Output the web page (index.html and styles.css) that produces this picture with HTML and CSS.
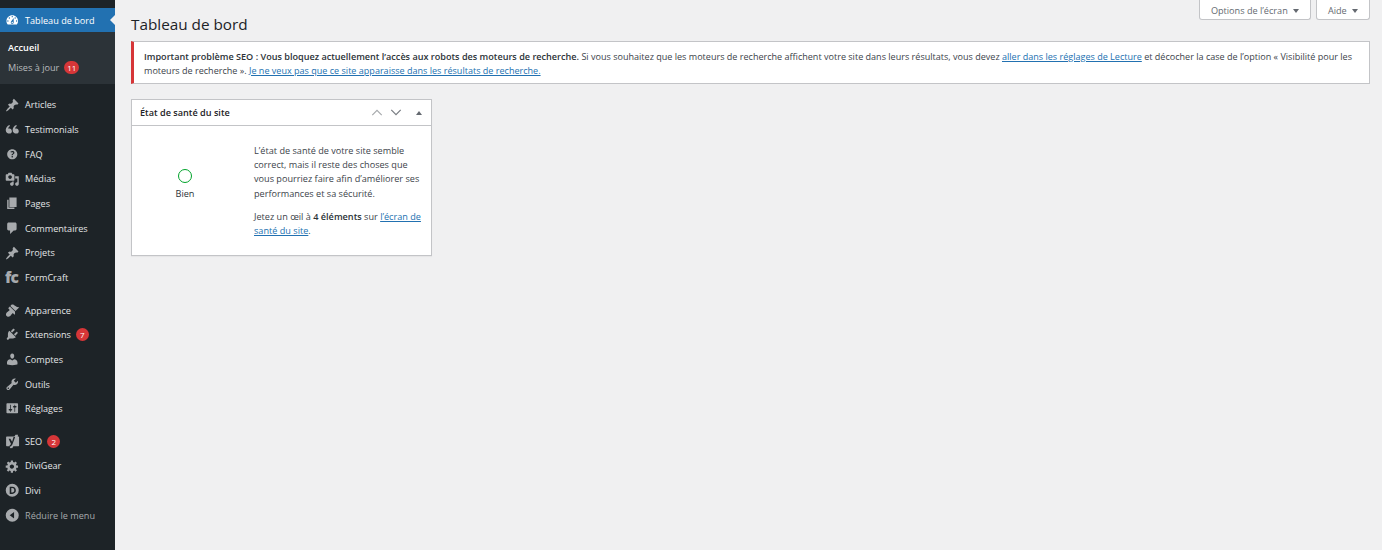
FILE: index.html
```html
<!DOCTYPE html>
<html lang="fr">
<head>
<meta charset="utf-8">
<title>Tableau de bord</title>
<link rel="stylesheet" href="styles.css">
</head>
<body>
<svg class="sprite" width="0" height="0" aria-hidden="true">
<symbol id="i-dash" viewBox="0 0 20 20"><path d="M3.76 16h12.48c1.1-1.37 1.76-3.11 1.76-5 0-4.42-3.58-8-8-8s-8 3.58-8 8c0 1.89.66 3.63 1.76 5zM10 4c.55 0 1 .45 1 1s-.45 1-1 1-1-.45-1-1 .45-1 1-1zM6 6c.55 0 1 .45 1 1s-.45 1-1 1-1-.45-1-1 .45-1 1-1zm8 0c.55 0 1 .45 1 1s-.45 1-1 1-1-.45-1-1 .45-1 1-1zm-5.37 5.55L12 7v6c0 1.1-.9 2-2 2s-2-.9-2-2c0-.57.24-1.08.63-1.45zM4 10c.55 0 1 .45 1 1s-.45 1-1 1-1-.45-1-1 .45-1 1-1zm12 0c.55 0 1 .45 1 1s-.45 1-1 1-1-.45-1-1 .45-1 1-1zm-5 3c0-.55-.45-1-1-1s-1 .45-1 1 .45 1 1 1 1-.45 1-1z" fill-rule="evenodd"/></symbol>
<symbol id="i-pin" viewBox="0 0 20 20"><path d="M10.44 3.02l1.82-1.82 6.36 6.35-1.83 1.82c-1.05-.68-2.48-.57-3.41.36l-.75.75c-.92.93-1.04 2.35-.35 3.41l-1.83 1.82-2.41-2.41-2.8 2.79c-.42.42-3.38 2.71-3.8 2.29s1.86-3.39 2.28-3.81l2.79-2.79L4.1 9.36l1.83-1.82c1.05.69 2.48.57 3.41-.36l.75-.75c.93-.92 1.04-2.35.35-3.41z"/></symbol>
<symbol id="i-quote" viewBox="0 0 20 20"><path d="M9.5 13c0 1.7-1.4 3-3.3 3C3.7 16 1 14.500 1 11c0-3.300 2.300-5.800 5-7l1 1.500C5.300 6.500 4.500 7.700 4.400 9.200c.5-.2 1-.3 1.600-.3 2 0 3.500 1.800 3.500 4.100zm9.500 0c0 1.700-1.400 3-3.300 3-2.500 0-5.200-1.500-5.200-5 0-3.300 2.300-5.800 5-7l1 1.500c-1.700 1-2.500 2.200-2.600 3.700.5-.2 1-.3 1.600-.3 2 0 3.500 1.800 3.500 4.100z"/></symbol>
<symbol id="i-help" viewBox="0 0 20 20"><path d="M17 10c0-3.870-3.140-7-7-7-3.870 0-7 3.130-7 7s3.130 7 7 7c3.860 0 7-3.130 7-7zm-6.300 1.480H9.140v-.43c0-.38.08-.7.24-.98s.46-.57.88-.89c.41-.29.68-.53.81-.71.14-.18.2-.39.2-.62 0-.25-.09-.44-.28-.58-.19-.13-.45-.19-.79-.19-.58 0-1.250.19-2 .57l-.64-1.280c.87-.49 1.800-.74 2.770-.74.81 0 1.450.2 1.920.58.48.39.71.91.71 1.550 0 .43-.09.8-.29 1.110-.19.32-.57.67-1.110 1.060-.38.28-.61.49-.71.63-.1.15-.15.34-.15.57v.35zm-1.470 2.740c-.18-.17-.27-.42-.27-.73 0-.33.08-.58.26-.75s.43-.25.77-.25c.32 0 .57.09.75.26s.27.42.27.74c0 .3-.09.55-.27.72-.18.18-.43.27-.75.27-.33 0-.58-.09-.76-.26z"/></symbol>
<symbol id="i-media" viewBox="0 0 20 20"><path d="M13 11V4c0-.55-.45-1-1-1h-1.670L9 1H5L3.670 3H2c-.55 0-1 .45-1 1v7c0 .55.45 1 1 1h10c.55 0 1-.45 1-1zM7 4.500c1.380 0 2.500 1.120 2.500 2.500S8.380 9.500 7 9.500 4.500 8.380 4.500 7 5.620 4.500 7 4.500zM14 6h5v10.500c0 1.380-1.120 2.500-2.500 2.500S14 17.880 14 16.500s1.120-2.500 2.500-2.500c.17 0 .34.02.5.05V9h-3V6zm-4 8.050V13h2v3.500c0 1.380-1.120 2.500-2.500 2.500S7 17.880 7 16.500 8.120 14 9.500 14c.17 0 .34.02.5.05z"/></symbol>
<symbol id="i-page" viewBox="0 0 20 20"><path d="M6 15V2h10v13H6zm-1 1h8v2H3V5h2v11z"/></symbol>
<symbol id="i-comment" viewBox="0 0 20 20"><path d="M5 2h9c1.100 0 2 .9 2 2v7c0 1.100-.9 2-2 2h-2l-5 5v-5H5c-1.100 0-2-.9-2-2V4c0-1.100.9-2 2-2z"/></symbol>
<symbol id="i-brush" viewBox="0 0 20 20"><path d="M14.480 11.060L7.410 3.990l1.500-1.500c.5-.56 2.300-.47 3.510.32 1.210.8 1.430 1.280 2.910 2.100 1.180.64 2.450 1.260 4.450.85zm-.71.71L6.700 4.700 4.930 6.470c-.39.39-.39 1.020 0 1.410l1.060 1.060c.39.39.39 1.030 0 1.420-.6.6-1.430 1.110-2.210 1.690-.35.26-.7.53-1.010.84-1.340 1.340-1.780 2.910-1.130 4.300.15.33.36.64.62.9.26.27.57.48.91.64 1.390.64 2.960.2 4.300-1.130.31-.31.58-.66.84-1.010.58-.78 1.090-1.610 1.690-2.210.39-.39 1.030-.39 1.420 0l1.060 1.060c.39.39 1.020.39 1.410 0z"/></symbol>
<symbol id="i-plug" viewBox="0 0 20 20"><path d="M13.110 4.360L9.870 7.600 8 5.730l3.240-3.240c.35-.34 1.050-.2 1.560.32.52.51.66 1.210.31 1.550zm-8 1.770l.91-1.120 9.010 9.010-1.190.84c-.71.71-2.630 1.160-3.820 1.160H6.140L4.900 17.260c-.59.59-1.540.59-2.120 0-.59-.58-.59-1.530 0-2.120l1.240-1.240v-3.880c0-1.130.4-3.190 1.090-3.890zm7.260 3.970l3.240-3.240c.34-.35 1.040-.21 1.550.31.52.51.66 1.210.31 1.550l-3.240 3.250z"/></symbol>
<symbol id="i-user" viewBox="0 0 20 20"><path d="M10 9.250c-2.270 0-2.730-3.440-2.730-3.440C7 4.020 7.820 2 9.970 2c2.160 0 2.980 2.020 2.710 3.810 0 0-.41 3.440-2.680 3.440zm0 2.570L12.720 10c2.390 0 4.520 2.330 4.520 4.530v2.490s-3.650 1.130-7.240 1.130c-3.650 0-7.240-1.130-7.240-1.130v-2.490c0-2.250 1.940-4.480 4.470-4.480z"/></symbol>
<symbol id="i-tool" viewBox="0 0 20 20"><path d="M16.680 9.770c-1.340 1.340-3.300 1.670-4.950.99l-5.410 6.520c-.99.99-2.590.99-3.580 0s-.99-2.590 0-3.570l6.520-5.420c-.68-1.650-.35-3.610.99-4.950 1.280-1.280 3.120-1.620 4.720-1.060l-2.890 2.890 2.820 2.820 2.860-2.870c.53 1.580.18 3.390-1.080 4.650zM3.810 16.210c.4.39 1.040.39 1.430 0 .4-.4.4-1.040 0-1.430-.39-.4-1.030-.4-1.430 0-.39.39-.39 1.030 0 1.430z"/></symbol>
<symbol id="i-set" viewBox="0 0 20 20"><path d="M18 16V4c0-.55-.45-1-1-1H3c-.55 0-1 .45-1 1v12c0 .55.45 1 1 1h14c.55 0 1-.45 1-1zM8 11h1c.55 0 1 .45 1 1s-.45 1-1 1H8v1.500c0 .28-.22.5-.5.5s-.5-.22-.5-.5V13H6c-.55 0-1-.45-1-1s.45-1 1-1h1V5.500c0-.28.22-.5.5-.5s.5.22.5.5V11zm5-2h-1c-.55 0-1-.45-1-1s.45-1 1-1h1V5.500c0-.28.22-.5.5-.5s.5.22.5.5V7h1c.55 0 1 .45 1 1s-.45 1-1 1h-1v5.500c0 .28-.22.5-.5.5s-.5-.22-.5-.5V9z"/></symbol>
<symbol id="i-yoast" viewBox="0 0 20 20"><path fill-rule="evenodd" d="M2.500 3.500H13L14.500 1H18L17.500 3.500H18.500c.5 0 1 .4 1 1V16c0 .6-.5 1-1 1H11.500L10 19.500H6.500L7.500 17H2.500c-.6 0-1-.4-1-1V4.500c0-.6.400-1 1-1zM5 6.500l3.300 7.300c-.3.9-.9 1.300-1.800 1.500v1.500c2 0 3.100-1 3.800-2.800l3.700-10h-2.200L9.800 10.700 7.300 6.500z"/></symbol>
<symbol id="i-gear" viewBox="0 0 20 20"><path d="M18 12h-2.180c-.17.7-.44 1.350-.81 1.930l1.540 1.540-2.100 2.100-1.540-1.540c-.58.36-1.230.63-1.910.79V19H8v-2.180c-.68-.16-1.330-.43-1.910-.79l-1.540 1.540-2.120-2.120 1.540-1.540c-.36-.58-.63-1.230-.79-1.910H1V9.030h2.170c.16-.7.44-1.350.8-1.940L2.430 5.550l2.100-2.100 1.540 1.540c.58-.37 1.240-.64 1.930-.81V2h3v2.180c.68.16 1.330.43 1.910.79l1.540-1.540 2.120 2.120-1.540 1.540c.36.59.64 1.240.8 1.940H18V12zm-8.500 1.500c1.660 0 3-1.340 3-3s-1.340-3-3-3-3 1.340-3 3 1.340 3 3 3z"/></symbol>
<symbol id="i-divi" viewBox="0 0 20 20"><path fill-rule="evenodd" d="M10 1a9 9 0 1 1 0 18 9 9 0 0 1 0-18zM6.500 5v10H10c3.200 0 5-2.100 5-5s-1.800-5-5-5zm2.200 2H10c1.800 0 2.800 1.200 2.800 3s-1 3-2.800 3H8.700z"/></symbol>
<symbol id="i-collapse" viewBox="0 0 20 20"><path fill-rule="evenodd" d="M10 1a9 9 0 1 1 0 18 9 9 0 0 1 0-18zm2.500 4.500L6.500 10l6 4.500z"/></symbol>
</svg>

<div class="layout">
  <nav class="sidebar">
    <a class="item current">
      <svg class="icon"><use href="#i-dash"/></svg><span>Tableau de bord</span>
    </a>
    <div class="submenu">
      <a class="sub strong">Accueil</a>
      <a class="sub">Mises à jour <b class="badge">11</b></a>
    </div>
    <div class="group">
      <a class="item"><svg class="icon"><use href="#i-pin"/></svg><span>Articles</span></a>
      <a class="item"><svg class="icon"><use href="#i-quote"/></svg><span>Testimonials</span></a>
      <a class="item"><svg class="icon"><use href="#i-help"/></svg><span>FAQ</span></a>
      <a class="item"><svg class="icon"><use href="#i-media"/></svg><span>Médias</span></a>
      <a class="item"><svg class="icon"><use href="#i-page"/></svg><span>Pages</span></a>
      <a class="item"><svg class="icon"><use href="#i-comment"/></svg><span>Commentaires</span></a>
      <a class="item"><svg class="icon"><use href="#i-pin"/></svg><span>Projets</span></a>
      <a class="item"><i class="icon fc">fc</i><span>FormCraft</span></a>
    </div>
    <div class="group">
      <a class="item"><svg class="icon"><use href="#i-brush"/></svg><span>Apparence</span></a>
      <a class="item"><svg class="icon"><use href="#i-plug"/></svg><span>Extensions</span><b class="badge">7</b></a>
      <a class="item"><svg class="icon"><use href="#i-user"/></svg><span>Comptes</span></a>
      <a class="item"><svg class="icon"><use href="#i-tool"/></svg><span>Outils</span></a>
      <a class="item"><svg class="icon"><use href="#i-set"/></svg><span>Réglages</span></a>
    </div>
    <div class="group">
      <a class="item"><svg class="icon"><use href="#i-yoast"/></svg><span>SEO</span><b class="badge">2</b></a>
      <a class="item"><svg class="icon"><use href="#i-gear"/></svg><span>DiviGear</span></a>
      <a class="item"><svg class="icon"><use href="#i-divi"/></svg><span>Divi</span></a>
      <a class="item muted"><svg class="icon"><use href="#i-collapse"/></svg><span>Réduire le menu</span></a>
    </div>
  </nav>

  <main class="content">
    <div class="screen-meta">
      <button class="tab tab-options">Options de l’écran <i class="caret"></i></button>
      <button class="tab tab-help">Aide <i class="caret"></i></button>
    </div>
    <h1 class="title">Tableau de bord</h1>
    <div class="notice">
      <p><strong>Important problème SEO : Vous bloquez actuellement l’accès aux robots des moteurs de recherche.</strong> Si vous souhaitez que les moteurs de recherche affichent votre site dans leurs résultats, vous devez <a class="link" href="#">aller dans les réglages de Lecture</a> et décocher la case de l’option « Visibilité pour les moteurs de recherche ». <a class="link" href="#">Je ne veux pas que ce site apparaisse dans les résultats de recherche.</a></p>
    </div>
    <section class="box">
      <header class="box-head">
        <h2>État de santé du site</h2>
        <div class="box-controls">
          <svg class="chev" viewBox="0 0 14 8"><path class="chev-up" d="M1.500 7 7 1.500 12.500 7"/></svg>
          <svg class="chev" viewBox="0 0 14 8"><path class="chev-down" d="M1.500 1 7 6.500 12.500 1"/></svg>
          <i class="tri"></i>
        </div>
      </header>
      <div class="box-body">
        <div class="status">
          <span class="ring"></span>
          <span>Bien</span>
        </div>
        <div class="desc">
          <p>L’état de santé de votre site semble correct, mais il reste des choses que vous pourriez faire afin d’améliorer ses performances et sa sécurité.</p>
          <p>Jetez un œil à <strong>4 éléments</strong> sur <a class="link" href="#">l’écran de santé du site</a>.</p>
        </div>
      </div>
    </section>
  </main>
</div>
</body>
</html>
```
FILE: styles.css
```css
* { box-sizing: border-box; }
html, body { margin: 0; height: 100%; }
body {
  background: #f0f0f1;
  color: #3c434a;
  font-family: "Open Sans", "Noto Sans", sans-serif;
  font-size: 9.15px;
  overflow: hidden;
}
.sprite { position: absolute; }
.layout { display: flex; height: 550px; }

.sidebar {
  width: 115px;
  flex: none;
  background: #1d2327;
  padding-top: 8px;
  color: #f0f0f1;
}
.item {
  display: flex;
  align-items: center;
  height: 24.65px;
  padding: 1.3px 0 0 5px;
  color: #e4e6e8;
  white-space: nowrap;
}
.item span { margin-left: 5.5px; }
.icon {
  width: 14.5px;
  height: 14.5px;
  flex: none;
  fill: #a7aaad;
}
.fc {
  font: normal 900 15.5px/14px "Open Sans", sans-serif;
  letter-spacing: -1px;
  color: #a7aaad;
}
.item.current {
  position: relative;
  background: #2271b1;
  color: #fff;
  height: 24px;
}
.item.current .icon { fill: #fff; }
.item.current::after {
  content: "";
  position: absolute;
  right: 0;
  top: 7px;
  border: 5px solid transparent;
  border-left-width: 0;
  border-right: 5px solid #f0f0f1;
}
.item.muted { color: #a7aaad; }
.submenu {
  background: #2c3338;
  padding: 5px 0 6px;
  height: 52px;
}
.sub {
  display: flex;
  align-items: center;
  height: 20px;
  padding-left: 8px;
  color: #b8bbbe;
}
.sub.strong { color: #fff; font-weight: 600; }
.badge {
  display: inline-block;
  min-width: 13px;
  height: 13px;
  margin-left: 5px;
  padding: 0 3px;
  border-radius: 7px;
  background: #d63638;
  color: #fff;
  font-size: 8px;
  font-weight: 400;
  line-height: 13px;
  text-align: center;
}
.group { margin-top: 8px; }

.content {
  position: relative;
  flex: 1;
  padding: 0 12px 0 16px;
}
.screen-meta {
  position: absolute;
  top: 0;
  right: 12px;
  display: flex;
  gap: 5px;
}
.tab {
  height: 20px;
  border: 1px solid #c3c4c7;
  border-top: 0;
  border-radius: 0 0 3px 3px;
  background: #fff;
  color: #646970;
  font: 9.15px "Open Sans", "Noto Sans", sans-serif;
  padding: 2px 0 0;
}
.tab-options { width: 112px; }
.tab-help { width: 54px; }
.caret {
  display: inline-block;
  margin-left: 3px;
  vertical-align: 1px;
  border: 3px solid transparent;
  border-bottom-width: 0;
  border-top: 4px solid #646970;
}
.title {
  margin: 0;
  padding-top: 14px;
  height: 41px;
  font-size: 15.3px;
  font-weight: 400;
  line-height: 21px;
  color: #1d2327;
}
.notice {
  height: 43px;
  border: 1px solid #c3c4c7;
  border-left: 3px solid #d63638;
  background: #fff;
  padding: 0 8px 0 10px;
}
.notice p {
  margin: 0;
  padding-top: 8px;
  font-size: 9.05px;
  line-height: 14px;
}
.link { color: #2271b1; text-decoration: underline; }
.notice strong, .desc strong { font-weight: 600; color: #2c3338; }
.notice strong { font-size: 9.1px; }

.box {
  width: 301px;
  height: 157px;
  margin-top: 15px;
  border: 1px solid #c3c4c7;
  background: #fff;
  box-shadow: 0 1px 1px rgba(0,0,0,.04);
}
.box-head {
  display: flex;
  align-items: center;
  justify-content: space-between;
  height: 26px;
  border-bottom: 1px solid #c3c4c7;
  padding: 0 9px 0 8px;
}
.box-head h2 {
  margin: 0;
  font-size: 9.15px;
  font-weight: 600;
  color: #1d2327;
}
.box-controls { display: flex; align-items: center; gap: 7px; }
.chev { width: 12px; height: 7px; fill: none; stroke-width: 1.4; }
.chev-up { stroke: #a7aaad; }
.chev-down { stroke: #787c82; }
.tri {
  margin-left: 7px;
  border: 3px solid transparent;
  border-top-width: 0;
  border-bottom: 4px solid #646970;
}
.box-body { display: flex; padding: 18px 9px 0 9px; }
.status {
  width: 88px;
  margin-right: 25px;
  flex: none;
  display: flex;
  flex-direction: column;
  align-items: center;
  padding-top: 25px;
  gap: 4px;
  color: #2c3338;
}
.ring {
  width: 14px;
  height: 14px;
  border: 1px solid #00a32a;
  border-radius: 50%;
}
.desc p { margin: 0 0 9px; line-height: 14.2px; }
```
